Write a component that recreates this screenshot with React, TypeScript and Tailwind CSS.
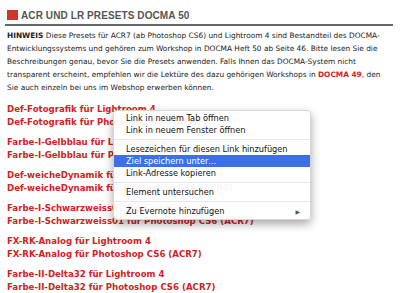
import React from "react";

const presets = [
  "Def-Fotografik",
  "Farbe-I-Gelbblau",
  "Def-weicheDynamik",
  "Farbe-I-Schwarzweiss01",
  "FX-RK-Analog",
  "Farbe-II-Delta32",
];

const ContextMenu = () => {
  const item = "h-[12px] pl-[12px] pr-[10px] flex items-center justify-between whitespace-nowrap";
  const sep = "h-[1px] bg-[#e8e8e8] my-[3px]";
  return (
    <div className="absolute left-[113px] top-[110px] w-[198px] rounded-[4px] bg-white/95 border border-[#d6d6d6] shadow-[0_4px_10px_rgba(0,0,0,0.35)] pt-[1px] pb-[2px] text-[8.2px] text-[#111] font-['DejaVu_Sans',sans-serif]">
      <div className={item}>Link in neuem Tab öffnen</div>
      <div className={item}>Link in neuem Fenster öffnen</div>
      <div className={sep} />
      <div className={item}>Lesezeichen für diesen Link hinzufügen</div>
      <div className={item + " bg-[#3d6fe9] text-white"}>Ziel speichern unter…</div>
      <div className={item}>Link-Adresse kopieren</div>
      <div className={sep} />
      <div className={item}>Element untersuchen</div>
      <div className={sep} />
      <div className={item}>
        <span>Zu Evernote hinzufügen</span>
        <span className="text-[6px] text-[#555]">▶</span>
      </div>
    </div>
  );
};

export default function App() {
  return (
    <div className="relative w-[400px] h-[293px] overflow-hidden bg-white">
      <div className="pt-[8px] pl-[7px] pr-[7px]">
        <div className="flex items-center gap-[3px] h-[14px]">
          <div className="w-[11px] h-[10px] bg-[#d2342a]" />
          <h1 className="text-[10px] font-bold text-[#555] font-['Liberation_Sans',sans-serif] tracking-[0.1px]">
            ACR UND LR PRESETS DOCMA 50
          </h1>
        </div>
        <div className="mt-[2px] h-[2px] bg-[#666] -ml-[2px]" />
        <p className="mt-[3px] text-[7.4px] leading-[13px] text-[#222] font-['DejaVu_Sans',sans-serif] whitespace-nowrap">
          <b>HINWEIS</b> Diese Presets für ACR7 (ab Photoshop CS6) und Lightroom 4 sind Bestandteil des DOCMA-
          <br />
          Entwicklungssystems und gehören zum Workshop in DOCMA Heft 50 ab Seite 46. Bitte lesen Sie die
          <br />
          Beschreibungen genau, bevor Sie die Presets anwenden. Falls Ihnen das DOCMA-System nicht
          <br />
          transparent erscheint, empfehlen wir die Lektüre des dazu gehörigen Workshops in{" "}
          <b className="text-[#d2231f]">DOCMA 49</b>, den
          <br />
          Sie auch einzeln bei uns im Webshop erwerben können.
        </p>
        <div className="mt-[9px] flex flex-col gap-[7px] text-[8.6px] leading-[13px] font-bold text-[#d2231f] font-['DejaVu_Sans',sans-serif] whitespace-nowrap">
          {presets.map((p) => (
            <div key={p}>
              <div>{p} für Lightroom 4</div>
              <div>{p} für Photoshop CS6 (ACR7)</div>
            </div>
          ))}
        </div>
      </div>
      <ContextMenu />
    </div>
  );
}
